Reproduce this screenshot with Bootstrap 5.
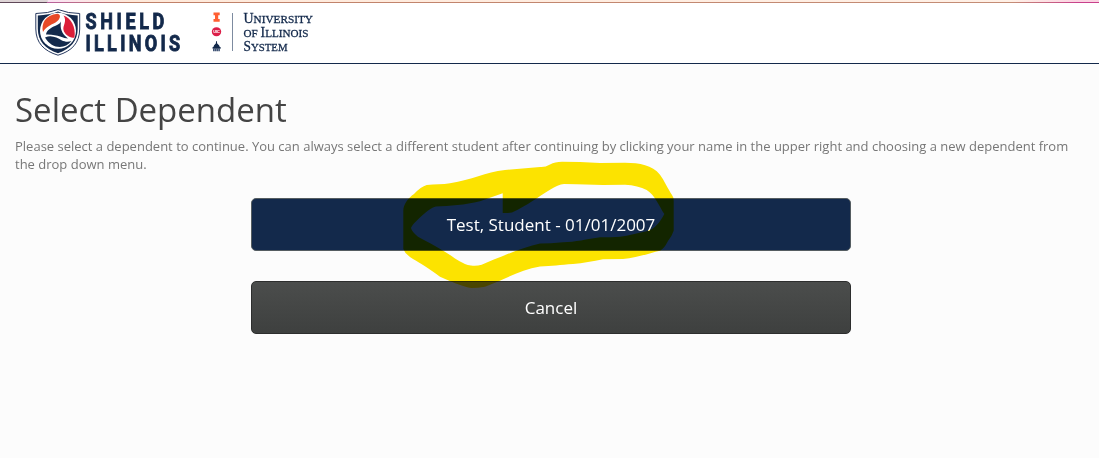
<!DOCTYPE html>
<html lang="en">
<head>
<meta charset="utf-8">
<meta name="viewport" content="width=device-width, initial-scale=1">
<title>Select Dependent</title>
<link href="https://cdn.jsdelivr.net/npm/bootstrap@5.3.0/dist/css/bootstrap.min.css" rel="stylesheet">
<style>
body{background:#fcfcfc;font-family:"Open Sans",sans-serif;color:#777;min-height:458px;overflow:hidden}
.strip{height:3px;border-bottom:1px solid;border-image:linear-gradient(90deg,#604858 0 4.3%,#b8609c 4.4%,#c08068 12%,#c48d76 92%,#c8408c 98%) 1;background:linear-gradient(90deg,#ded4d6 0 4.3%,#f9e2f2 4.4%,#ffe9da 12%,#fff0e6 92%,#fbd3e2 98%)}
.site-header{height:61px;border-bottom:1px solid #13294b}
.intro-block{margin:0 15px}
h1{font-size:33px;line-height:44px;color:#444;margin:24px 0 5px;font-weight:400}
.intro{font-size:13px;line-height:18px}
.choices{width:600px;gap:30px;margin:25px auto 0;left:1.5px}
.choice{height:53px;border-radius:5px;font-size:17px;color:#fff;border:1px solid #555d61;background:#13294b;padding:0}
.choice:hover{color:#fff;background:#13294b}
.choice.cancel,.choice.cancel:hover{border-color:#2d2e2e;background:linear-gradient(#4b4d4c,#3e403f)}
.marker{left:152px;top:-39px;mix-blend-mode:multiply;pointer-events:none}
</style>
<script src="https://cdn.jsdelivr.net/npm/bootstrap@5.3.0/dist/js/bootstrap.bundle.min.js"></script>
</head>
<body>
<div class="strip"></div>
<header class="site-header bg-white">
<svg class="d-block" width="330" height="60" viewBox="0 3 330 60" role="img" aria-label="Shield Illinois, University of Illinois System">
  <!-- shield -->
  <path d="M58 9.500Q48 13.500 35.800 13.500V29C36 43 44 51 58 55.200C72 51 79.500 43 79.700 29V13.500Q68 13.500 58 9.500Z" fill="#fff" stroke="#283a60" stroke-width="1"/>
  <path d="M58 11.500Q49 15.200 37.800 15.400V29C38 41 45 49 58 53.200C70.500 49 77.500 41 77.700 29V15.400Q67 15.200 58 11.500Z" fill="#13294b"/>
  <circle cx="58" cy="30.800" r="18" fill="#fff"/>
  <path d="M43 32C41 24 45 15 57.500 13.800C61.500 14.500 60.500 19.500 55.500 22.500C50.500 25 46.500 26.500 43 32Z" fill="#e84a27"/>
  <path d="M63.500 15.500C71 18 76 27 74.500 37.500C70.500 38.800 64.500 34.500 63.500 30C62.500 25.500 67.500 21 63.500 15.500Z" fill="#dc1e38"/>
  <path d="M61 21.500C59.800 28 61.500 33.500 68 38.500C63.500 38.500 57.500 34 46 34.500C46.500 30 51.500 27.500 55 26C58 24.800 60 23.500 61 21.500Z" fill="#13294b"/>
  <path d="M45 37.500C52 34.500 57 38 61.500 40.200C65 42 68.500 42 71.500 41C65 49.500 52 49.500 45 37.500Z" fill="#13294b"/>
  <g fill="#13294b" stroke="#13294b" stroke-width=".9" font-family="Roboto,sans-serif" font-weight="700" font-size="22">
    <text transform="translate(85.500 28.500) scale(.82 1)" textLength="96">SHIELD</text>
    <text transform="translate(85.500 50.800) scale(.82 1)" textLength="115.500">ILLINOIS</text>
  </g>
  <path d="M213.500 12.500h6.200v2.800h-1.500v3.700h1.500v2.700h-6.200v-2.700h1.500v-3.700h-1.500z" fill="#ff5f32"/>
  <ellipse cx="216.500" cy="31.800" rx="4.700" ry="4.500" fill="#dc1e48"/>
  <text x="216.500" y="33.400" text-anchor="middle" textLength="6.500" font-family="Roboto,sans-serif" font-size="4.200" font-weight="700" fill="#fff">UIC</text>
  <path d="M216.200 41h.6l.4 2.500q2.400 1.500 2.600 3.500h.8v1.700h-8V47h.8q.2-2 2.400-3.500z" fill="#13294b"/>
  <path d="M213 50h7.200" stroke="#405475" stroke-width="2.600" stroke-dasharray="1.500 .3"/>
  <path d="M232.500 13v38" stroke="#7d8ba0"/>
  <g fill="#13294b" stroke="#13294b" stroke-width=".3" font-family="Liberation Serif,serif" font-size="14">
    <text x="243.500" y="23" textLength="69.500" lengthAdjust="spacingAndGlyphs">U<tspan font-size="11.300">NIVERSITY</tspan></text>
    <text x="243.500" y="37" textLength="65" lengthAdjust="spacingAndGlyphs"><tspan font-size="11.300">OF </tspan>I<tspan font-size="11.300">LLINOIS</tspan></text>
    <text x="243.500" y="51" textLength="44" lengthAdjust="spacingAndGlyphs">S<tspan font-size="11.300">YSTEM</tspan></text>
  </g>
</svg>
</header>
<main class="container-fluid px-0">
  <div class="intro-block">
    <h1>Select Dependent</h1>
    <p class="intro mb-0">Please select a dependent to continue. You can always select a different student after continuing by clicking your name in the upper right and choosing a new dependent from the drop down menu.</p>
  </div>
  <div class="choices d-flex flex-column position-relative">
    <button type="button" class="btn choice">Test, Student - 01/01/2007</button>
    <button type="button" class="btn choice cancel">Cancel</button>
    <!-- highlighter stroke -->
    <svg class="marker position-absolute" width="274" height="130" viewBox="403 160 274 130" aria-hidden="true">
      <path fill="#ffe600" fill-rule="evenodd" d="M426.700 186C435 185 443 185.500 450 184.300C472 181 485 173 505 171L540 168Q545 168.500 550 165.500Q555 162.700 562 162.700L580 163L600 164L625 163.800C640 164 652 166 660 175.700C664 181 668 190 672 196Q673.700 198 673.700 202V231.700Q672 237 668 242Q664 250 660 251.700C650 254 636 259 623 260L603 260.300C593 262 583 264.500 573 265C560 266 552 267 540 267.500C520 271 503 281 485 287.700Q478 289 471.700 289Q463 288 440 277.700C428 269 420 264 413 260Q405 255 403.300 250V212C403 206 408 199 414 195Q421 187.500 426.700 186Z
      M411 229Q412 226 416.700 221.700Q430 208.500 436 207.500C450 207 465 206 480 202.300L502.700 194.300V214Q508 214.300 512 213.500C528 206 538 198 550 190.700Q558 185.500 564 185L576.700 185.300L603 186L625 185.800Q638 186.500 646.700 191C655 196 659 207 664.300 215C660 223 655 230 646.700 232.300C637 234 629 237 620 237.700Q611 238.300 600 238.300C587 240 575 243.300 563 243.300Q550 244.500 540 244.500C521 249 500 258 481.700 265.700Q476 267.500 471 266.500Q465 266 455 259.500C445 252 430 244 418 237.700Q412 233 411 229Z"/>
    </svg>
  </div>
</main>
</body>
</html>
